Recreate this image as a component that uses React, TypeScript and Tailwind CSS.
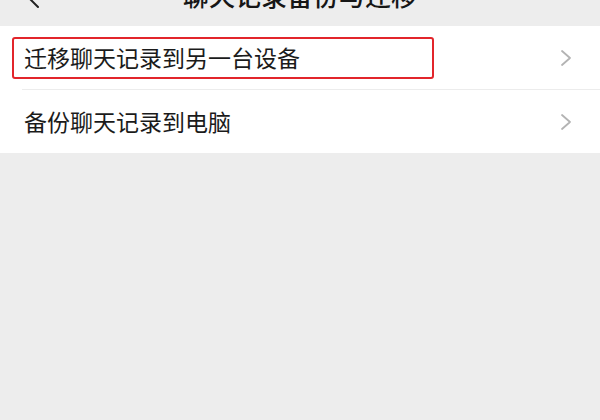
import React from 'react';

const font = { fontFamily: '"Noto Sans CJK SC", "Noto Sans", sans-serif' };

const Chevron: React.FC = () => (
    <svg width="14" height="20" viewBox="0 0 14 20" fill="none" className="shrink-0">
        <path d="M3 3 L11 10 L3 17" stroke="#b3b3b3" strokeWidth="1.8" strokeLinecap="round" strokeLinejoin="round" />
    </svg>
);

interface RowProps {
    label: string;
    highlighted?: boolean;
}

const Row: React.FC<RowProps> = ({ label, highlighted }) => (
    <div className="h-[63px] flex items-center justify-between pl-3 pr-[27px]">
        <div
            className={
                highlighted
                    ? 'w-[422px] h-[42px] flex items-center pl-[10px] border-2 border-[#e2252b] rounded-[3px]'
                    : 'w-[422px] h-[42px] flex items-center pl-[10px] border-2 border-transparent'
            }
        >
            <span className="text-[23px] text-[#1b1b1b] leading-none whitespace-nowrap">{label}</span>
        </div>
        <Chevron />
    </div>
);

export default function App() {
    return (
        <div className="w-[600px] h-[420px] bg-[#ededed] overflow-hidden" style={font}>
            {/* header, top cut off */}
            <div className="h-[26px] relative overflow-hidden bg-[#ededed]">
                <div className="h-[60px] -mt-[35px] flex items-center justify-center relative">
                    <svg width="16" height="28" viewBox="0 0 16 28" fill="none" className="absolute left-[24px]">
                        <path d="M14 2 L2 14 L14 26" stroke="#222" strokeWidth="2" strokeLinecap="round" strokeLinejoin="round" />
                    </svg>
                    <span className="text-[26px] font-medium text-[#161616] leading-none">聊天记录备份与迁移</span>
                </div>
            </div>

            <div className="bg-white">
                <Row label="迁移聊天记录到另一台设备" highlighted />
                <div className="ml-[22px] h-px bg-[#ececec]" />
                <Row label="备份聊天记录到电脑" />
            </div>
        </div>
    );
}
